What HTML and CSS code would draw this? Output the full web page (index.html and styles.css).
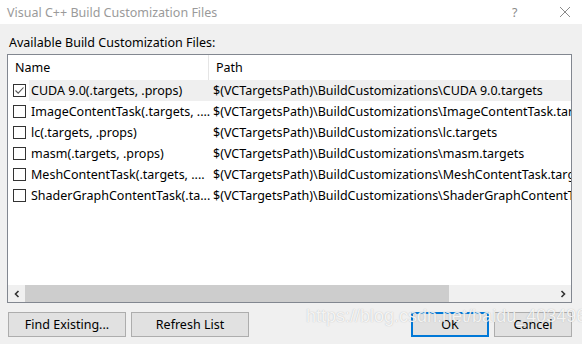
FILE: index.html
```html
<!DOCTYPE html>
<html lang="en">
  <head>
    <meta charset="UTF-8" />
    <title>Visual C++ Build Customization Files</title>
    <link rel="stylesheet" href="styles.css">
  </head>
  <body>
    <div class="dialog">
      <div class="titlebar">
        <span class="title">Visual C++ Build Customization Files</span>
        <span class="help">?</span>
        <svg class="close" width="12" height="12" viewBox="0 0 12 12">
          <path d="M1 1 L11 11 M11 1 L1 11" stroke="#8a8a8a" stroke-width="1" fill="none" />
        </svg>
      </div>

      <div class="content">
        <div class="label">Available Build Customization Files:</div>

        <div class="list">
          <div class="header">
            <div class="col-name">Name</div>
            <div class="col-path">Path</div>
          </div>

          <div class="row selected">
            <span class="check checked">
              <svg width="11" height="11" viewBox="0 0 11 11"><path d="M1.5 5.5 L4.2 8.2 L9.5 2.5" stroke="#555" stroke-width="1.1" fill="none" /></svg>
            </span>
            <div class="col-name">CUDA 9.0(.targets, .props)</div>
            <div class="col-path">$(VCTargetsPath)\BuildCustomizations\CUDA 9.0.targets</div>
          </div>
          <div class="row">
            <span class="check"></span>
            <div class="col-name">ImageContentTask(.targets, ....</div>
            <div class="col-path">$(VCTargetsPath)\BuildCustomizations\ImageContentTask.targets</div>
          </div>
          <div class="row">
            <span class="check"></span>
            <div class="col-name">lc(.targets, .props)</div>
            <div class="col-path">$(VCTargetsPath)\BuildCustomizations\lc.targets</div>
          </div>
          <div class="row">
            <span class="check"></span>
            <div class="col-name">masm(.targets, .props)</div>
            <div class="col-path">$(VCTargetsPath)\BuildCustomizations\masm.targets</div>
          </div>
          <div class="row">
            <span class="check"></span>
            <div class="col-name">MeshContentTask(.targets, ....</div>
            <div class="col-path">$(VCTargetsPath)\BuildCustomizations\MeshContentTask.targets</div>
          </div>
          <div class="row">
            <span class="check"></span>
            <div class="col-name">ShaderGraphContentTask(.ta...</div>
            <div class="col-path">$(VCTargetsPath)\BuildCustomizations\ShaderGraphContentTask.targets</div>
          </div>

          <div class="spacer"></div>

          <div class="hscroll">
            <span class="arrow">
              <svg width="8" height="8" viewBox="0 0 8 8"><path d="M5.5 1 L2.5 4 L5.5 7" stroke="#333" stroke-width="1.6" fill="none" /></svg>
            </span>
            <div class="track">
              <div class="thumb"></div>
            </div>
            <span class="arrow">
              <svg width="8" height="8" viewBox="0 0 8 8"><path d="M2.5 1 L5.5 4 L2.5 7" stroke="#333" stroke-width="1.6" fill="none" /></svg>
            </span>
          </div>
        </div>

        <div class="buttons">
          <button class="btn wide">Find Existing...</button>
          <button class="btn wide">Refresh List</button>
          <div class="grow"></div>
          <button class="btn small default">OK</button>
          <button class="btn small">Cancel</button>
        </div>

        <div class="watermark">https://blog.csdn.net/baidu_40349693</div>
      </div>
    </div>
  </body>
</html>
```

FILE: styles.css
```css
* {
  box-sizing: border-box;
}
body {
  margin: 0;
  background: #f0f0f0;
  font-family: "Noto Sans", "Open Sans", sans-serif;
  font-size: 12px;
  color: #000;
}
.dialog {
  width: 582px;
  height: 344px;
  overflow: hidden;
}
.titlebar {
  height: 24px;
  background: #fff;
  display: flex;
  align-items: center;
  padding-left: 7px;
  color: #9a9a9a;
  font-size: 12.5px;
}
.title {
  flex: 1;
}
.help {
  width: 12px;
  margin-right: 35px;
  color: #8a8a8a;
}
.close {
  margin-right: 11px;
}
.content {
  position: relative;
  padding: 9px 10px 0 7px;
}
.label {
  height: 19px;
  line-height: 19px;
  padding-left: 2px;
  margin-bottom: 2px;
  font-size: 12.5px;
}
.list {
  height: 249px;
  border: 1px solid #828790;
  background: #fff;
  display: flex;
  flex-direction: column;
  overflow: hidden;
  font-size: 12.5px;
}
.header {
  height: 25px;
  flex-shrink: 0;
  display: flex;
  align-items: center;
}
.header .col-name {
  width: 201px;
  flex-shrink: 0;
  padding-left: 7px;
  border-right: 1px solid #e5e5e5;
  height: 25px;
  line-height: 25px;
}
.header .col-path {
  padding-left: 7px;
}
.row {
  height: 21px;
  flex-shrink: 0;
  display: flex;
  align-items: center;
  white-space: nowrap;
  padding-left: 5px;
  position: relative;
  overflow: hidden;
}
.row.selected::before {
  content: "";
  position: absolute;
  left: 21px;
  right: 0;
  top: 0;
  bottom: 0;
  background: #efefef;
}
.check {
  width: 13px;
  height: 13px;
  border: 1px solid #333;
  background: #fff;
  display: flex;
  align-items: center;
  justify-content: center;
  flex-shrink: 0;
  position: relative;
}
.row .col-name {
  width: 184px;
  flex-shrink: 0;
  padding-left: 5px;
  overflow: hidden;
  position: relative;
}
.row .col-path {
  padding-left: 3px;
  flex-shrink: 0;
  position: relative;
}
.spacer {
  flex: 1;
}
.hscroll {
  height: 17px;
  flex-shrink: 0;
  display: flex;
  background: #f0f0f0;
}
.arrow {
  width: 17px;
  display: flex;
  align-items: center;
  justify-content: center;
}
.track {
  flex: 1;
  display: flex;
}
.thumb {
  width: 424px;
  height: 17px;
  background: #cdcdcd;
}
.buttons {
  display: flex;
  margin-top: 9px;
  gap: 5px;
  padding-left: 1px;
}
.grow {
  flex: 1;
}
.btn {
  height: 25px;
  background: #e1e1e1;
  border: 1px solid #adadad;
  font-family: inherit;
  font-size: 12.5px;
  color: #000;
  padding: 0;
}
.wide {
  width: 118px;
}
.small {
  width: 78px;
}
.default {
  border: 2px solid #0078d7;
}
.watermark {
  position: absolute;
  left: 306px;
  top: 282px;
  font-family: "Liberation Sans", Arial, sans-serif;
  font-size: 18px;
  color: rgba(255, 255, 255, 0.85);
  text-shadow: 0 0 1px rgba(120, 120, 120, 0.5);
  white-space: nowrap;
  pointer-events: none;
}
```
